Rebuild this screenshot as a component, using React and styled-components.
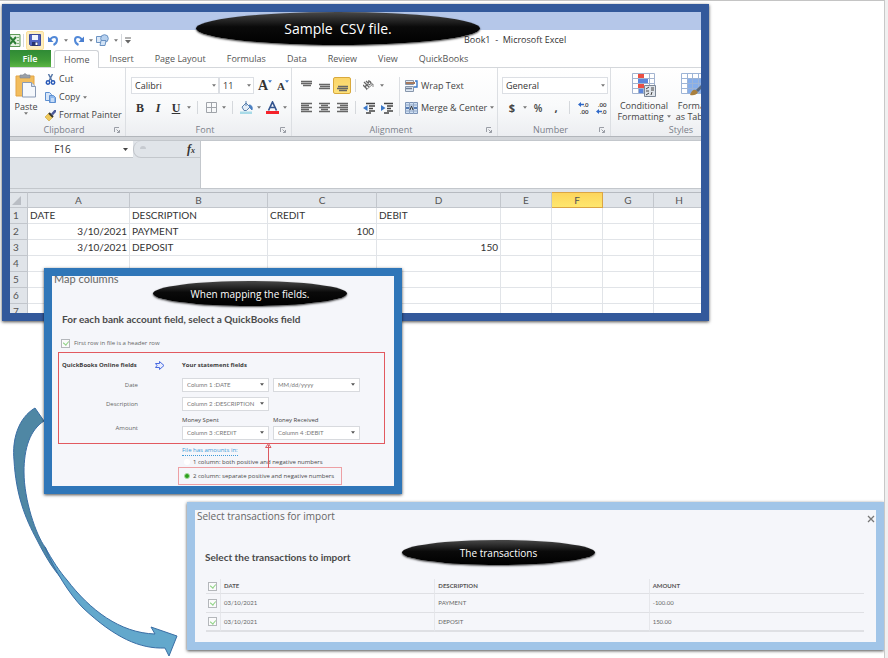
import React from 'react'
import styled, { createGlobalStyle, css } from 'styled-components'

const GlobalStyle = createGlobalStyle`
  * {
    box-sizing: border-box;
  }
  body {
    margin: 0;
    background: #f0f0f0;
    font-family: 'Open Sans', 'Noto Sans', sans-serif;
  }
  button, select, input {
    font: inherit;
    color: inherit;
    margin: 0;
    padding: 0;
  }
  svg {
    display: block;
    flex: none;
  }
`

const Canvas = styled.main`
  position: relative;
  min-height: 100vh;
  margin-right: 3px;
  background: #fff;
  border-top: 1px solid #c4c4c4;
  border-right: 1px solid #c8c8c8;
  overflow: hidden;
`

/* windows */

const Window = styled.section`
  position: absolute;
  border: 8px solid ${(p) => p.$frame};
  box-shadow: 0 1px 3px rgba(0, 0, 0, 0.7);
`

const ExcelWindow = styled(Window)`
  top: 3px;
  left: 2px;
  right: 175px;
  background: #fff;
  color: #444;
  font-size: 9px;
  line-height: 12px;
`

const MapWindow = styled(Window)`
  top: 267px;
  left: 44px;
  right: 482px;
  background: #f5f6fa;
`

const ImportWindow = styled(Window)`
  top: 501px;
  left: 187px;
  right: 0;
  background: #f5f6fa;
`

const Callout = styled.div`
  position: absolute;
  top: ${(p) => p.$top}px;
  left: ${(p) => p.$left}px;
  width: ${(p) => p.$width}px;
  height: ${(p) => (p.$large ? 33 : 25)}px;
  display: flex;
  align-items: center;
  justify-content: center;
  border-radius: 50%;
  background: linear-gradient(#484848, #0a0a0a 45%, #000);
  box-shadow: 0 1px 2px rgba(0, 0, 0, 0.7);
  color: #fff;
  font-size: ${(p) => (p.$large ? 14 : 10)}px;
  white-space: pre;
`

/* excel */

const TitleStrip = styled.div`
  height: 18px;
  background: #b5c7e9;
`

const QuickBar = styled.div`
  display: flex;
  align-items: center;
  height: 20px;
  position: relative;
`

const BookTitle = styled.span`
  position: absolute;
  left: 454px;
  top: 4px;
  color: #333;
  white-space: pre;
`

const ToolButton = styled.button`
  display: flex;
  align-items: center;
  justify-content: center;
  flex: none;
  width: ${(p) => p.$width || 18}px;
  height: 17px;
  border: 1px solid transparent;
  border-radius: 2px;
  background: none;
  ${(p) =>
    p.$active &&
    css`
      border-color: #d9a93c;
      background: linear-gradient(#fbd569, #fde27c);
    `}
  ${(p) =>
    p.$soft &&
    css`
      height: 19px;
      border-color: #fbe09a;
      background: #fdeec0;
    `}
`

const Separator = styled.span`
  flex: none;
  width: 1px;
  height: 13px;
  margin: 0 ${(p) => (p.$tight ? 2 : 4)}px;
  background: #d5d8dc;
`

const Tabs = styled.nav`
  display: flex;
  height: 18px;
  border-bottom: 1px solid #d4d7db;
`

const Tab = styled.button`
  height: 17px;
  padding: 0 11px 0 10px;
  border: 0;
  background: none;
  color: #555;
  ${(p) =>
    p.$file &&
    css`
      width: 41px;
      margin-right: 3px;
      background: linear-gradient(#2f8a35, #3f9b38 60%, #5bb543);
      color: #fff;
      font-weight: 600;
    `}
  ${(p) =>
    p.$current &&
    css`
      height: 18px;
      padding: 0 9px;
      border: 1px solid #cfd2d6;
      border-bottom: 0;
      border-radius: 3px 3px 0 0;
      background: #fff;
    `}
`

const Ribbon = styled.div`
  display: flex;
  height: 68px;
  overflow: hidden;
  background: linear-gradient(#fff, #f9fafb 55%, #eceef1);
`

const Group = styled.div`
  display: flex;
  flex-direction: column;
  justify-content: space-between;
  flex: none;
  width: ${(p) => p.$width}px;
  padding: ${(p) => (p.$big ? 5 : 9)}px 0 0 4px;
  border-right: 1px solid #dcdfe3;
`

const GroupFoot = styled.div`
  display: flex;
  align-items: center;
  height: 12px;
  padding-right: 5px;
  color: #7b808a;
  span {
    flex: 1;
    text-align: center;
  }
`

const ToolRows = styled.div`
  display: flex;
  flex-direction: column;
  gap: 5px;
`

const ToolRow = styled.div`
  display: flex;
  align-items: center;
  height: 17px;
  padding-left: 1px;
`

const Columns = styled.div`
  display: flex;
  height: 46px;
`

const PasteTools = styled.div`
  display: flex;
  flex-direction: column;
  gap: 6px;
  margin-left: 7px;
`

const TextTools = styled(ToolRows)`
  height: 39px;
  margin-left: 3px;
  padding-left: 5px;
  border-left: 1px solid #dcdfe3;
`

const TextTool = styled.button`
  display: flex;
  align-items: center;
  gap: 3px;
  height: ${(p) => (p.$tall ? 17 : 12)}px;
  border: 0;
  background: none;
  white-space: nowrap;
`

const BigTool = styled.button`
  display: flex;
  flex-direction: column;
  align-items: center;
  flex: none;
  width: ${(p) => p.$width}px;
  border: 0;
  background: none;
  line-height: 11px;
  white-space: nowrap;
  svg + span {
    margin-top: 3px;
  }
  span {
    display: flex;
    align-items: center;
    gap: 3px;
  }
`

const Combo = styled.span`
  position: relative;
  display: flex;
  flex: none;
  width: ${(p) => p.$width}px;
  height: 17px;
  select {
    appearance: none;
    width: 100%;
    padding: 0 3px;
    border: 1px solid #dcdfe4;
    border-radius: 0;
    background: #fff;
    color: #333;
  }
  svg {
    position: absolute;
    right: 3px;
    top: 7px;
    pointer-events: none;
  }
`

const RibbonEdge = styled.div`
  height: 5px;
  border-top: 1px solid #b2b6bb;
  border-bottom: 1px solid #c3c7cc;
  background: #d3d6da;
`

const FormulaBar = styled.div`
  display: flex;
  height: 48px;
  background: #e0e4e9;
  border-bottom: 1px solid #c3c7cc;
`

const NameBox = styled.div`
  display: flex;
  align-items: center;
  width: 123px;
  height: 17px;
  padding-right: 5px;
  background: #fff;
  border-bottom: 1px solid #c3c7cc;
  input {
    flex: 1;
    min-width: 0;
    padding-right: 8px;
    border: 0;
    background: none;
    color: #333;
    font-size: 10px;
    text-align: center;
  }
`

const FxArea = styled.div`
  display: flex;
  align-items: center;
  justify-content: space-between;
  width: 67px;
  height: 17px;
  padding: 0 5px;
  border-left: 1px solid #bfc3c9;
  border-bottom: 1px solid #c3c7cc;
  border-radius: 8px 0 0 8px;
`

const FxButton = styled.button`
  border: 0;
  background: none;
  color: #333;
  font: italic bold 12px/14px 'Liberation Serif', serif;
  sub {
    font-size: 8px;
    line-height: 8px;
    vertical-align: baseline;
  }
`

const FormulaInput = styled.input`
  flex: 1;
  min-width: 0;
  border: 0;
  border-left: 1px solid #c3c7cc;
  background: #fff;
`

const SheetView = styled.div`
  height: 124px;
  overflow: hidden;
  border-top: 3px solid #e0e4e9;
`

const Sheet = styled.table`
  width: 695px;
  min-width: 100%;
  table-layout: fixed;
  border-collapse: separate;
  border-spacing: 0;
  color: #333;
  font-family: Lato, sans-serif;
  font-size: 10px;
  line-height: 15px;
  th, td {
    height: 16px;
    padding: 0 2px;
    border-right: 1px solid #e1e4e8;
    border-bottom: 1px solid #e1e4e8;
    text-align: left;
    white-space: nowrap;
  }
  thead th {
    border-top: 1px solid #b6bac0;
    line-height: 14px;
  }
  th {
    background: #e0e4e9;
    border-color: #c2c6cc;
    color: #555;
    font-weight: 400;
    text-align: center;
  }
  tbody th {
    padding: 0 8px 0 3px;
    text-align: left;
  }
`

const ColumnHead = styled.th`
  ${(p) =>
    p.$picked &&
    css`
      && {
        background: linear-gradient(#fdd55c, #fee76e);
        border-color: #dba544;
      }
    `}
`

const Cell = styled.td`
  && {
    text-align: ${(p) => (p.$number ? 'right' : 'left')};
  }
`

/* quickbooks */

const Body = styled.div`
  display: flex;
  flex-direction: column;
  overflow: hidden;
  color: #666;
  font-size: 6px;
  line-height: 10px;
`

const MapTitle = styled.h2`
  margin: -4px 0 0 2px;
  color: #666;
  font-family: Lato, sans-serif;
  font-size: 11px;
  font-weight: 400;
  line-height: 14px;
`

const ImportTitle = styled(MapTitle)`
  margin-top: -1px;
  font-family: 'Open Sans', sans-serif;
  font-size: 10px;
`

const Heading = styled.h3`
  margin: ${(p) => p.$gap}px 10px 0;
  color: #4a4a4a;
  font-family: Lato, sans-serif;
  font-size: 10px;
  font-weight: 700;
  line-height: 12px;
`

const CheckLabel = styled.label`
  display: flex;
  align-items: center;
  gap: 4px;
  margin: 13px 0 4px 9px;
  height: 10px;
`

const Tick = styled.input`
  appearance: none;
  display: grid;
  place-items: center;
  width: 9px;
  height: 9px;
  border: 1px solid #b4b7bb;
  background: #fbfbfc;
  &:checked::after {
    content: '';
    width: 3px;
    height: 4px;
    margin-top: -1px;
    border: solid #8fd285;
    border-width: 0 1px 1px 0;
    transform: rotate(40deg);
  }
`

const FieldBox = styled.div`
  display: grid;
  grid-template-columns: 76px 44px 1fr;
  row-gap: 5px;
  align-items: center;
  margin: 0 9px 0 6px;
  padding: 4px 3px 3px;
  border: 1px solid #e2595f;
`

const FieldHead = styled.strong`
  color: #3c3c3c;
  line-height: 16px;
  white-space: nowrap;
`

const ArrowCell = styled.span`
  display: grid;
  place-items: center;
`

const FieldName = styled.label`
  grid-column: 1;
  text-align: right;
`

const FieldRow = styled.div`
  grid-column: 3;
  display: flex;
  gap: 4px;
`

const Field = styled.div`
  flex: 0 1 87px;
  min-width: 0;
  label {
    display: block;
    height: 8px;
    margin-bottom: 2px;
    line-height: 8px;
    color: #444;
  }
`

const SelectWrap = styled.div`
  position: relative;
  select {
    display: block;
    appearance: none;
    width: 100%;
    height: 14px;
    padding: 0 4px;
    border: 1px solid #d8dade;
    border-radius: 0;
    background: #fff;
    color: #777;
    font-family: Lato, sans-serif;
  }
  svg {
    position: absolute;
    right: 5px;
    top: 5px;
    pointer-events: none;
  }
`

const Amounts = styled.div`
  position: relative;
  display: flex;
  flex-direction: column;
  align-items: flex-start;
  margin: 2px 0 1px 126px;
  a {
    margin-left: 4px;
    line-height: 9px;
    color: #3d9bd9;
    text-decoration: none;
    border-bottom: 1px dotted #3d9bd9;
  }
`

const Choice = styled.label`
  display: flex;
  align-items: center;
  gap: 3px;
  height: ${(p) => (p.$boxed ? 18 : 11)}px;
  padding: 0 7px 0 5px;
  border: 1px solid ${(p) => (p.$boxed ? '#eda0a4' : 'transparent')};
  color: #4a4a4a;
`

const Radio = styled.input`
  appearance: none;
  width: 6px;
  height: 6px;
  border-radius: 50%;
  background: #fff;
  &:checked {
    border: 1px solid #a9dca0;
    background: #2ca01c;
  }
`

const UpArrow = styled.svg`
  position: absolute;
  left: 86px;
  top: -4px;
`

const CloseButton = styled.button`
  position: absolute;
  top: 5px;
  right: 1px;
  border: 0;
  background: none;
  color: #777;
`

const TransactionTable = styled.table`
  width: calc(100% - 23px);
  margin: 16px 12px 10px 11px;
  table-layout: fixed;
  border-collapse: separate;
  border-spacing: 0;
  font-family: Lato, sans-serif;
  th, td {
    height: 19px;
    padding: 0 3px;
    border-right: 1px solid #e6e7eb;
    border-bottom: 1px solid #dfe0e4;
    text-align: left;
  }
  th {
    height: 15px;
    color: #555;
    font-weight: 700;
  }
  th:first-child, td:first-child {
    padding: 0 0 0 2px;
  }
  th:last-child, td:last-child {
    border-right: 0;
  }
  tr:last-child td {
    border-bottom-width: 2px;
  }
`

const Swoosh = styled.svg`
  position: absolute;
  left: 0;
  top: 399px;
`

/* icons */

const Caret = ({ size = 5, color = '#777' }) => (
  <svg width={size} height="3" viewBox="0 0 5 3"><path d="M0 0h5L2.5 3z" fill={color} /></svg>
)

const ExcelIcon = () => (
  <svg width="11" height="13" viewBox="0 0 11 13">
    <path d="M0 .5h10v12H0z" fill="#e6f2e2" stroke="#5f9a58" />
    <path d="M0 3l6 7M6 3l-6 7" stroke="#2c7d34" strokeWidth="2" />
    <path d="M7 3.5h2M7 6.5h2M7 9.5h2" stroke="#83b57b" />
  </svg>
)

const SaveIcon = () => (
  <svg width="12" height="12" viewBox="0 0 12 12">
    <path d="M.5 .5h11v11h-10l-1-1z" fill="#5165c0" stroke="#3c4a9a" />
    <path d="M3 1h6v5H3z" fill="#f2f5fc" />
    <path d="M3 8h6v4H3z" fill="#28346f" />
    <path d="M6.5 8.5h2V11h-2z" fill="#fff" />
  </svg>
)

const UndoIcon = ({ flip }) => (
  <svg width="11" height="11" viewBox="0 0 11 11">
    <g transform={flip ? 'matrix(-1 0 0 1 11 0)' : undefined} fill="none" stroke="#5289d8" strokeWidth="2">
      <path d="M2 5C4 1 9 1 9 5c0 2-1.500 4-3.500 5" />
      <path d="M0 1.500V7h5.500z" fill="#4a7fd0" stroke="none" />
    </g>
  </svg>
)

const ShapesIcon = () => (
  <svg width="14" height="13" viewBox="0 0 14 13" stroke="#6b93c3">
    <path d="M.5 2.500h6v6h-6z" fill="#dbe8f7" />
    <circle cx="8.500" cy="4.500" r="3.800" fill="#b6d0ee" />
    <path d="M5 6.500h5l-1 5H4z" fill="#d2e3f6" />
  </svg>
)

const MoreIcon = () => (
  <svg width="6" height="7" viewBox="0 0 6 7"><path d="M0 1h6" stroke="#666" /><path d="M0 3h6L3 6.500z" fill="#666" /></svg>
)

const PasteIcon = () => (
  <svg width="22" height="25" viewBox="0 0 22 25">
    <path d="M1 3h18v20H1z" fill="#f2bd5d" stroke="#e3a547" />
    <path d="M5 5V2h3q2-3 4 0h3v3z" fill="#9aa0a8" stroke="#81878f" strokeWidth=".6" />
    <path d="M7.500 9.500h9l4 4v10.500h-13z" fill="#f5f8fc" stroke="#8a9bb5" />
    <path d="M16.500 9.500v4h4" fill="#d5dfec" stroke="#8a9bb5" />
  </svg>
)

const CutIcon = () => (
  <svg width="11" height="11" viewBox="0 0 10 11" fill="none">
    <path d="M3 0l3.500 7M7 0L3.500 7" stroke="#5878a8" strokeWidth="1.500" />
    <circle cx="2.500" cy="8.500" r="1.700" stroke="#2859b8" strokeWidth="1.500" />
    <circle cx="7.500" cy="8.500" r="1.700" stroke="#2859b8" strokeWidth="1.500" />
  </svg>
)

const CopyIcon = () => (
  <svg width="11" height="11" viewBox="0 0 11 11" stroke="#5d8fd0">
    <path d="M.5 .5h4l2 2v6h-6z" fill="#d6e5f8" />
    <path d="M4.500 3.500h4l2 2v5h-6z" fill="#8db7ec" />
    <path d="M6 7h3M6 9h3" stroke="#fff" />
  </svg>
)

const PainterIcon = () => (
  <svg width="11" height="11" viewBox="0 0 11 11">
    <path d="M0 7l4-4 4 4-4 4z" fill="#efc95c" stroke="#caa136" strokeWidth=".6" />
    <path d="M4 3l4 4" stroke="#333" strokeWidth="2" />
    <path d="M7 4.500L11 0" stroke="#4b5a9a" strokeWidth="2.500" />
  </svg>
)

const Launcher = () => (
  <svg width="6" height="6" viewBox="0 0 6 6" fill="none" stroke="#9a9ea6">
    <path d="M.5 5V.5H5M2.500 2.500l3 3M5.500 3v2.500H3" />
  </svg>
)

const Letter = styled.span`
  position: relative;
  color: #333;
  font: bold ${(p) => p.$size || 12}px/14px 'Liberation Serif', serif;
  font-style: ${(p) => (p.$italic ? 'italic' : 'normal')};
  text-decoration: ${(p) => (p.$underline ? 'underline' : 'none')};
  svg {
    position: absolute;
    right: -4px;
    top: 1px;
  }
`

const SansLetter = styled.span`
  color: #444;
  font-size: ${(p) => (p.$strong ? 11 : 10)}px;
  font-weight: ${(p) => (p.$strong ? 700 : 600)};
`

const BorderIcon = () => (
  <svg width="11" height="11" viewBox="0 0 11 11" fill="none" stroke="#a0a4aa">
    <path d="M.5 .5h10v10H.5zM5.500 0v11M0 5.500h11" />
  </svg>
)

const BucketIcon = () => (
  <svg width="13" height="13" viewBox="0 0 13 13">
    <path d="M2 6l4-4 4 4-3.500 3.500H4z" fill="#e4edf7" stroke="#5b81ae" />
    <path d="M6 5V0" stroke="#5b81ae" />
    <path d="M9 4q4 0 3 5-2-1-3-5" fill="#4a7fc1" stroke="#4a7fc1" />
    <path d="M0 10.500h12V13H0z" fill="#a9dbe8" />
  </svg>
)

const FontColorIcon = () => (
  <svg width="13" height="13" viewBox="0 0 13 13">
    <path d="M2.500 9.500L6.500 1l4 8.500M4 6.500h5" fill="none" stroke="#34558f" strokeWidth="1.700" />
    <path d="M0 10h13v3H0z" fill="#f5222a" />
  </svg>
)

const LINES = {
  top: 'M0 1.500h11M0 3.500h11M2 5.500h8',
  middle: 'M0 4.500h11M1 6.500h10M0 8.500h11',
  bottom: 'M1 6.500h10M0 8.500h11M2 10.500h8',
  left: 'M0 1.500h11M0 3.500h8M0 5.500h11M0 7.500h8M0 9.500h11',
  center: 'M0 1.500h11M2 3.500h7M0 5.500h11M2 7.500h7M0 9.500h11',
  right: 'M0 1.500h11M3 3.500h8M0 5.500h11M3 7.500h8M0 9.500h11',
}

const LinesIcon = ({ kind }) => (
  <svg width="11" height="12" viewBox="0 0 11 12"><path d={LINES[kind]} stroke="#666" strokeWidth="1.600" /></svg>
)

const OrientationIcon = () => (
  <svg width="12" height="12" viewBox="0 0 12 12" fill="none" stroke="#666">
    <path d="M1 2l5 5M3 1l4 4M0 5l4 4M5 1q3 0 3 3M2 7l4-5" strokeWidth="1.300" />
    <path d="M3 10l7-6M10 7V4H7" stroke="#888" />
  </svg>
)

const IndentIcon = ({ inward }) => (
  <svg width="12" height="12" viewBox="0 0 12 12">
    <path d="M3 1.500h9M6 4h6M6 6.500h4M6 9h6M3 11h5" stroke="#444" strokeWidth="1.400" />
    <path d={inward ? 'M0 3v6l4.500-3z' : 'M4.500 3v6L0 6z'} fill="#3a78c9" />
  </svg>
)

const WrapIcon = () => (
  <svg width="13" height="12" viewBox="0 0 13 12">
    <path d="M.5 .5h8v4h-8zM.5 6.500h8v5h-8z" fill="#dfe9f5" stroke="#8796ab" />
    <path d="M1 3h9" stroke="#a5795d" strokeWidth="2" />
    <path d="M1 8.500h6" stroke="#6f7f95" strokeWidth="1.500" />
    <path d="M10 1h2v6H9" fill="none" stroke="#3a78c9" strokeWidth="1.400" />
  </svg>
)

const MergeIcon = () => (
  <svg width="13" height="12" viewBox="0 0 13 12">
    <path d="M.5 .5h12v11H.5z" fill="#cfe0f4" stroke="#7c93b5" />
    <path d="M4.500 0v12M8.500 0v12M0 3h13M0 9h13" stroke="#90a5c3" />
    <path d="M1 6h3M9 6h3" stroke="#2f5b9f" strokeWidth="1.500" />
    <path d="M5 8l1.500-4L8 8" fill="none" stroke="#333" />
  </svg>
)

const Decimals = styled.span`
  display: flex;
  flex-direction: column;
  color: #444;
  font-family: Lato, sans-serif;
  font-size: 6px;
  font-weight: 700;
  line-height: 7px;
  span {
    display: flex;
    align-items: center;
    justify-content: flex-end;
  }
`

const BlueArrow = () => (
  <svg width="6" height="5" viewBox="0 0 6 5">
    <path d="M0 2.500L3 0v1.700h3v1.600H3V5z" fill="#2f68c8" />
  </svg>
)

const ConditionalIcon = () => (
  <svg width="24" height="24" viewBox="0 0 24 24">
    <path d="M.5 .5h22v20H.5z" fill="#fff" />
    <path d="M6 0h6v5H6zM6 10h6v5H6z" fill="#ea4f44" />
    <path d="M6 5h10v5H6z" fill="#5c86dc" />
    <path d="M6 15h5v5H6z" fill="#5c86dc" />
    <path d="M.5 .5h22v20H.5zM6.500 0v20M11.500 0v20M17.500 0v20M0 5.500h22M0 10.500h22M0 15.500h22" fill="none" stroke="#a3b4d0" />
    <path d="M6 1h6v4H6zM6 11h6v4H6z" fill="#ea4f44" />
    <path d="M6 6h10v4H6z" fill="#5c86dc" />
    <path d="M12.500 12.500h11v11h-11z" fill="#dfe4ea" stroke="#7c8796" />
    <path d="M14 16l3-2M14 18h3M19 15h3M19 17h3M14 22l3-2M20 19l-1 3" stroke="#444" />
  </svg>
)

const TableIcon = () => (
  <svg width="24" height="24" viewBox="0 0 24 24">
    <path d="M.5 .5h22v20H.5z" fill="#fff" />
    <path d="M6 5h17v15H6z" fill="#86aeea" />
    <path d="M.5 .5h22v20H.5zM6.500 0v20M11.500 0v20M17.500 0v20M0 5.500h22M0 10.500h22M0 15.500h22" fill="none" stroke="#9db4d6" />
    <path d="M9 22q2-6 6-5l2 2q-2 4-8 3" fill="#a9803e" />
    <path d="M16 18l7-7" stroke="#58687e" strokeWidth="3" />
  </svg>
)

const RightArrow = () => (
  <svg width="10" height="9" viewBox="0 0 10 9">
    <path d="M.5 2.500h4v-2l4.500 4-4.500 4v-2h-4l1.500-2z" fill="#e8edfd" stroke="#4a6be0" />
  </svg>
)

const COLUMNS = [102, 138, 109, 124, 51, 51, 51, 51]
const LETTERS = 'ABCDEFGH'
const ROWS = [
  ['DATE', 'DESCRIPTION', 'CREDIT', 'DEBIT'],
  ['3/10/2021', 'PAYMENT', '100', ''],
  ['3/10/2021', 'DEPOSIT', '', '150'],
  [], [], [], [],
]
const TABS = ['Insert', 'Page Layout', 'Formulas', 'Data', 'Review', 'View', 'QuickBooks']
const TRANSACTIONS = [
  ['03/10/2021', 'PAYMENT', '-100.00'],
  ['03/10/2021', 'DEPOSIT', '150.00'],
]

function Foot({ children }) {
  return (
    <GroupFoot>
      <span>{children}</span>
      <Launcher />
    </GroupFoot>
  )
}

function Dropdown({ id, label, value }) {
  return (
    <SelectWrap>
      <select id={id} aria-label={label}>
        <option>{value}</option>
      </select>
      <Caret size={4} color="#555" />
    </SelectWrap>
  )
}

function RibbonCombo({ label, value, width }) {
  return (
    <Combo $width={width}>
      <select aria-label={label}>
        <option>{value}</option>
      </select>
      <Caret size={4} />
    </Combo>
  )
}

function CaretButton({ label, width = 8 }) {
  return (
    <ToolButton $width={width} aria-label={label}><Caret size={4} /></ToolButton>
  )
}

function ExcelRibbon() {
  return (
    <Ribbon>
      <Group $width={116} $big>
        <Columns>
          <BigTool $width={24}>
            <PasteIcon />
            <span>Paste</span>
            <Caret size={4} />
          </BigTool>
          <PasteTools>
            <TextTool><CutIcon /> Cut</TextTool>
            <TextTool><CopyIcon /> Copy <Caret size={4} /></TextTool>
            <TextTool><PainterIcon /> Format Painter</TextTool>
          </PasteTools>
        </Columns>
        <Foot>Clipboard</Foot>
      </Group>

      <Group $width={166}>
        <ToolRows>
          <ToolRow>
            <RibbonCombo label="Font" value="Calibri" width={88} />
            <RibbonCombo label="Font size" value="11" width={35} />
            <ToolButton aria-label="Grow font">
              <Letter $size={14}>A<Caret size={4} color="#3a78c9" /></Letter>
            </ToolButton>
            <ToolButton aria-label="Shrink font">
              <Letter $size={11}>A<Caret size={4} color="#3a78c9" /></Letter>
            </ToolButton>
          </ToolRow>
          <ToolRow>
            <ToolButton><Letter>B</Letter></ToolButton>
            <ToolButton><Letter $italic>I</Letter></ToolButton>
            <ToolButton><Letter $underline>U</Letter></ToolButton>
            <CaretButton label="Underline style" />
            <Separator />
            <ToolButton aria-label="Borders"><BorderIcon /></ToolButton>
            <CaretButton label="Border style" />
            <Separator />
            <ToolButton aria-label="Fill color"><BucketIcon /></ToolButton>
            <CaretButton label="Fill colors" />
            <ToolButton aria-label="Font color"><FontColorIcon /></ToolButton>
            <CaretButton label="Font colors" />
          </ToolRow>
        </ToolRows>
        <Foot>Font</Foot>
      </Group>

      <Group $width={206}>
        <Columns as="div">
          <ToolRows>
            <ToolRow>
              <ToolButton aria-label="Top align"><LinesIcon kind="top" /></ToolButton>
              <ToolButton aria-label="Middle align"><LinesIcon kind="middle" /></ToolButton>
              <ToolButton $active aria-label="Bottom align"><LinesIcon kind="bottom" /></ToolButton>
              <Separator />
              <ToolButton aria-label="Orientation"><OrientationIcon /></ToolButton>
              <CaretButton label="Orientations" />
            </ToolRow>
            <ToolRow>
              <ToolButton aria-label="Align left"><LinesIcon kind="left" /></ToolButton>
              <ToolButton aria-label="Center"><LinesIcon kind="center" /></ToolButton>
              <ToolButton aria-label="Align right"><LinesIcon kind="right" /></ToolButton>
              <Separator />
              <ToolButton aria-label="Decrease indent"><IndentIcon /></ToolButton>
              <ToolButton aria-label="Increase indent"><IndentIcon inward /></ToolButton>
            </ToolRow>
          </ToolRows>
          <TextTools>
            <TextTool $tall><WrapIcon /> Wrap Text</TextTool>
            <TextTool $tall><MergeIcon /> Merge &amp; Center <Caret size={4} /></TextTool>
          </TextTools>
        </Columns>
        <Foot>Alignment</Foot>
      </Group>

      <Group $width={113}>
        <ToolRows>
          <RibbonCombo label="Number format" value="General" width={106} />
          <ToolRow>
            <ToolButton><SansLetter $strong>$</SansLetter></ToolButton>
            <CaretButton label="Currencies" />
            <ToolButton><SansLetter>%</SansLetter></ToolButton>
            <ToolButton><SansLetter $strong>,</SansLetter></ToolButton>
            <Separator />
            <ToolButton aria-label="Increase decimal">
              <Decimals>
                <span><BlueArrow />.0</span>
                <span>.00</span>
              </Decimals>
            </ToolButton>
            <ToolButton aria-label="Decrease decimal">
              <Decimals>
                <span>.00</span>
                <span><BlueArrow />.0</span>
              </Decimals>
            </ToolButton>
          </ToolRow>
        </ToolRows>
        <Foot>Number</Foot>
      </Group>

      <Group $width={148} $big>
        <Columns>
          <BigTool $width={58}>
            <ConditionalIcon />
            <span>Conditional</span>
            <span>Formatting <Caret size={4} /></span>
          </BigTool>
          <BigTool $width={40}>
            <TableIcon />
            <span>Format</span>
            <span>as Table</span>
          </BigTool>
        </Columns>
        <Foot>Styles</Foot>
      </Group>
    </Ribbon>
  )
}

function Excel() {
  return (
    <ExcelWindow $frame="#33599b">
      <TitleStrip />
      <QuickBar>
        <ExcelIcon />
        <Separator $tight />
        <ToolButton $soft aria-label="Save"><SaveIcon /></ToolButton>
        <ToolButton aria-label="Undo"><UndoIcon /></ToolButton>
        <CaretButton label="Undo list" width={7} />
        <ToolButton aria-label="Redo"><UndoIcon flip /></ToolButton>
        <CaretButton label="Redo list" width={7} />
        <ToolButton aria-label="Shapes"><ShapesIcon /></ToolButton>
        <CaretButton label="Shape list" width={7} />
        <Separator $tight />
        <ToolButton $width={8} aria-label="Customize"><MoreIcon /></ToolButton>
        <BookTitle>Book1  -  Microsoft Excel</BookTitle>
      </QuickBar>
      <Tabs>
        <Tab $file>File</Tab>
        <Tab $current>Home</Tab>
        {TABS.map((name) => (
          <Tab key={name}>{name}</Tab>
        ))}
      </Tabs>
      <ExcelRibbon />
      <RibbonEdge />
      <FormulaBar>
        <NameBox>
          <input aria-label="Name box" defaultValue="F16" />
          <Caret color="#444" />
        </NameBox>
        <FxArea>
          <svg width="8" height="8" viewBox="0 0 8 8"><path d="M1 4q0-3 3-3t3 3z" fill="#c6cad0" /></svg>
          <FxButton>f<sub>x</sub></FxButton>
        </FxArea>
        <FormulaInput aria-label="Formula" />
      </FormulaBar>
      <SheetView>
        <Sheet>
          <colgroup>
            <col width="18" />
            {COLUMNS.map((w, i) => <col key={i} width={w} />)}
          </colgroup>
          <thead>
            <tr>
              <th aria-label="Select all">
                <svg width="9" height="9" viewBox="0 0 9 9"><path d="M9 0v9H0z" fill="#b9bdc4" /></svg>
              </th>
              {[...LETTERS].map((l) => (
                <ColumnHead key={l} $picked={l === 'F'}>{l}</ColumnHead>
              ))}
            </tr>
          </thead>
          <tbody>
            {ROWS.map((row, r) => (
              <tr key={r}>
                <th>{r + 1}</th>
                {COLUMNS.map((w, c) => (
                  <Cell key={c} $number={/^\d/.test(row[c] || '')}>{row[c]}</Cell>
                ))}
              </tr>
            ))}
          </tbody>
        </Sheet>
      </SheetView>
      <Callout $large $top={0} $left={186} $width={284}>{'Sample  CSV file.'}</Callout>
    </ExcelWindow>
  )
}

function MapColumns() {
  return (
    <MapWindow $frame="#2f76b8">
      <Body>
        <MapTitle>Map columns</MapTitle>
        <Heading $gap={27}>For each bank account field, select a QuickBooks field</Heading>
        <CheckLabel>
          <Tick type="checkbox" defaultChecked />
          First row in file is a header row
        </CheckLabel>
        <FieldBox>
          <FieldHead>QuickBooks Online fields</FieldHead>
          <ArrowCell><RightArrow /></ArrowCell>
          <FieldHead>Your statement fields</FieldHead>

          <FieldName htmlFor="date">Date</FieldName>
          <FieldRow>
            <Field><Dropdown id="date" value="Column 1 :DATE" /></Field>
            <Field><Dropdown label="Date format" value="MM/dd/yyyy" /></Field>
          </FieldRow>

          <FieldName htmlFor="description">Description</FieldName>
          <FieldRow>
            <Field><Dropdown id="description" value="Column 2 :DESCRIPTION" /></Field>
          </FieldRow>

          <FieldName as="span">Amount</FieldName>
          <FieldRow>
            <Field>
              <label htmlFor="spent">Money Spent</label>
              <Dropdown id="spent" value="Column 3 :CREDIT" />
            </Field>
            <Field>
              <label htmlFor="received">Money Received</label>
              <Dropdown id="received" value="Column 4 :DEBIT" />
            </Field>
          </FieldRow>
        </FieldBox>
        <Amounts>
          <a href="#amounts">File has amounts in:</a>
          <Choice>
            <Radio type="radio" name="amounts" />
            1 column: both positive and negative numbers
          </Choice>
          <Choice $boxed>
            <Radio type="radio" name="amounts" defaultChecked />
            2 column: separate positive and negative numbers
          </Choice>
          <UpArrow width="8" height="26" viewBox="0 0 8 26" fill="none" stroke="#dc5a60">
            <path d="M4.500 26V3M1.500 5.500l3-4 2.500 4z" />
          </UpArrow>
        </Amounts>
      </Body>
      <Callout $top={5} $left={101} $width={194}>When mapping the fields.</Callout>
    </MapWindow>
  )
}

function ImportTransactions() {
  return (
    <ImportWindow $frame="#a1c5e8">
      <Body>
        <ImportTitle>Select transactions for import</ImportTitle>
        <Heading $gap={28}>Select the transactions to import</Heading>
        <TransactionTable>
          <colgroup>
            <col width="15" />
            <col />
            <col />
            <col />
          </colgroup>
          <thead>
            <tr>
              <th><Tick type="checkbox" defaultChecked aria-label="Select all transactions" /></th>
              <th>DATE</th>
              <th>DESCRIPTION</th>
              <th>AMOUNT</th>
            </tr>
          </thead>
          <tbody>
            {TRANSACTIONS.map(([date, description, amount]) => (
              <tr key={description}>
                <td><Tick type="checkbox" defaultChecked aria-label={description} /></td>
                <td>{date}</td>
                <td>{description}</td>
                <td>{amount}</td>
              </tr>
            ))}
          </tbody>
        </TransactionTable>
      </Body>
      <CloseButton aria-label="Close">
        <svg width="8" height="8" viewBox="0 0 8 8"><path d="M1 1l6 6M7 1L1 7" stroke="currentColor" strokeWidth="1.300" /></svg>
      </CloseButton>
      <Callout $top={30} $left={207} $width={193}>The transactions</Callout>
    </ImportWindow>
  )
}

export default function App() {
  return (
    <>
      <GlobalStyle />
      <Canvas>
        <Excel />
        <Swoosh width="180" height="258" viewBox="0 0 180 258" stroke="#3a6ea5">
          <path d="M35 8C18 18 12 40 14 60c2 35 11 58 23 80 9 18 18 32 27 41-8-11-14-23-19-34C36 135 24 100 24 72c0-24 6-42 20-51z" fill="#4f87a4" />
          <path d="M45 147c7 13 15 25 22 33 23 30 53 53 88 54l-4-7 26 9-8 20-4-8c-25 1-50-10-82-40-13-13-29-38-38-61z" fill="#63a8cc" />
        </Swoosh>
        <MapColumns />
        <ImportTransactions />
      </Canvas>
    </>
  )
}
